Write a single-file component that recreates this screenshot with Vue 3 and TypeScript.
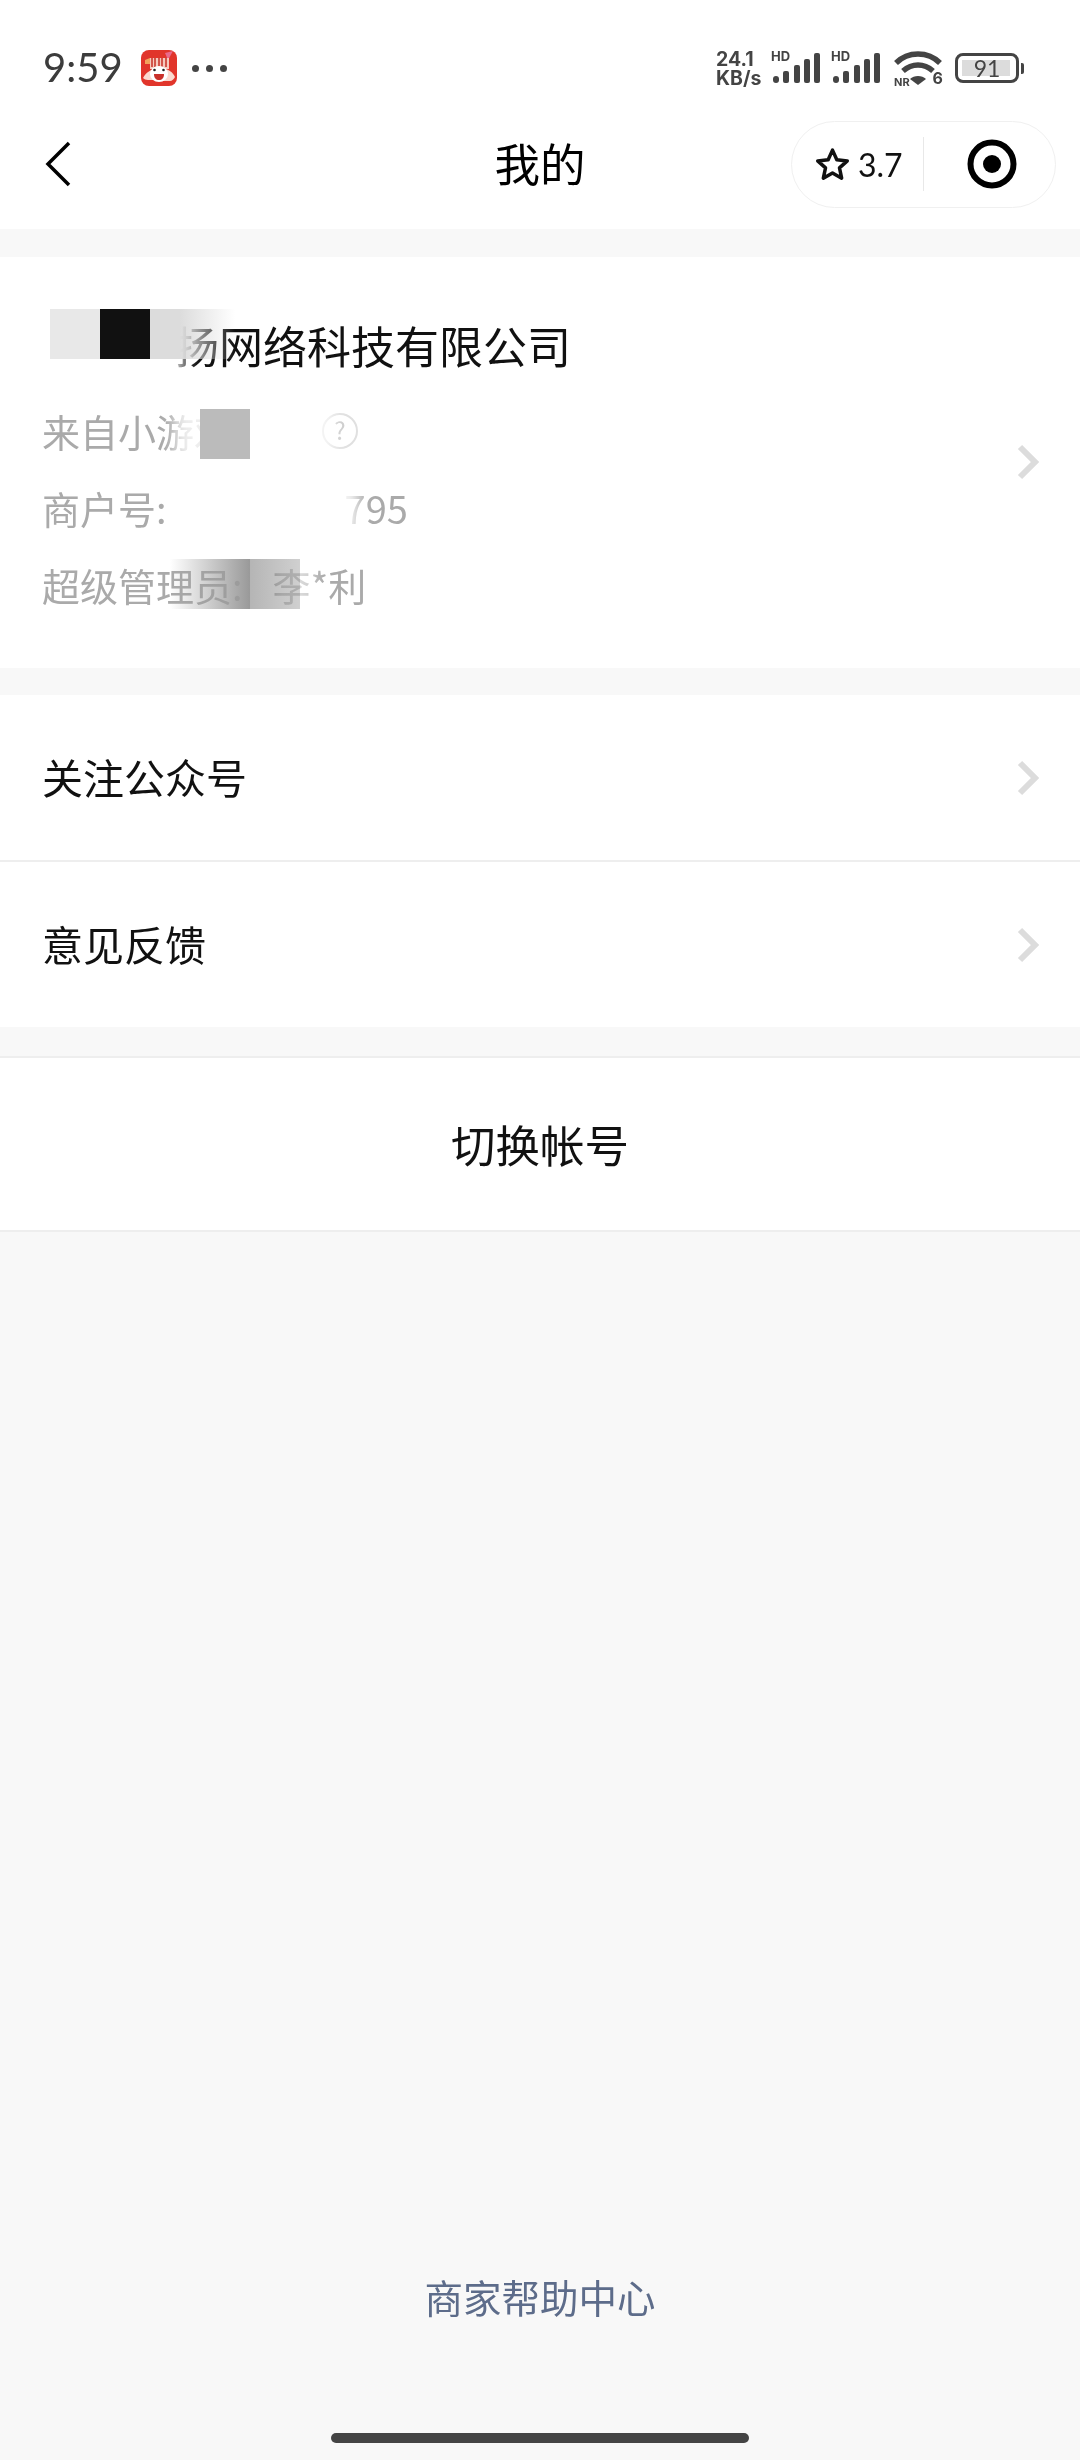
<template>
  <div class="page">
    <header class="top">
      <div class="status">
        <div class="status-left">
          <span class="clock">9:59</span>
          <svg class="app-icon" viewBox="0 0 36 36">
            <rect width="36" height="36" rx="8" fill="#e1352b" />
            <path d="M24 3l8-2-5 9z" fill="#e96a8c" />
            <path d="M4 10l5-2v6H4z" fill="#f2a35c" />
            <path d="M9 8h19v11H9z" fill="#f6c9bd" />
            <path d="M11 8v9M14 8v9M18 8v9M21 8v9M25 8v9" stroke="#c9392f" stroke-width="1.6" />
            <path d="M2 28c3-6 8-8 11-9l4 11H7c-2 0-4-1-5-2zM34 27c-2-5-7-8-11-8l-3 12h9c2 0 4-2 5-4z" fill="#fbd9cf" />
            <ellipse cx="18" cy="24" rx="9" ry="8" fill="#fff" />
            <circle cx="13.5" cy="20" r="1.3" fill="#222" />
            <circle cx="22.5" cy="20" r="1.3" fill="#222" />
            <path d="M13 24h10c0 4-2 6-5 6s-5-2-5-6z" fill="#c9302a" />
          </svg>
          <div class="dots"><i></i><i></i><i></i></div>
        </div>
        <div class="status-right">
          <div class="speed">24.1<br />KB/s</div>
          <div v-for="n in 2" :key="n" class="signal">
            <span class="hd">HD</span>
            <svg viewBox="0 0 48 32">
              <rect x="0" y="24" width="6" height="7" rx="3" />
              <rect x="10" y="19" width="6" height="12" rx="2" />
              <rect x="21" y="13" width="6" height="18" rx="2" />
              <rect x="31" y="7" width="6" height="24" rx="2" />
              <rect x="41" y="1" width="6" height="30" rx="2" />
            </svg>
          </div>
          <div class="wifi">
            <svg viewBox="0 0 48 36">
              <path d="M2 13C14 1 34 1 46 13" />
              <path d="M9 21c9-8 21-8 30 0" />
              <path d="M24 35l-8-6c4-4 12-4 16 0z" class="fill" />
            </svg>
            <span class="wifi-nr">NR</span>
            <span class="wifi-num">6</span>
          </div>
          <div class="battery">
            <div class="battery-body"><span class="battery-level"></span><span class="battery-text">91</span></div>
            <i class="battery-nub"></i>
          </div>
        </div>
      </div>

      <nav class="nav">
        <svg class="back" viewBox="0 0 26 46">
          <path d="M24 2L3 23l21 21" />
        </svg>
        <h1 class="title">我的</h1>
        <div class="capsule">
          <div class="rate">
            <svg class="star" viewBox="0 0 36 36">
              <path d="M18 4l4.2 9.4 10.2 1.1-7.6 6.8 2.1 10L18 26.200 9.100 31.300l2.100-10-7.600-6.800 10.200-1.100z" />
            </svg>
            <span>3.7</span>
          </div>
          <i class="capsule-line"></i>
          <svg class="target" viewBox="0 0 50 50">
            <circle cx="25" cy="25" r="21.500" fill="none" stroke="#000" stroke-width="6" />
            <circle cx="25" cy="25" r="9" fill="#000" />
          </svg>
        </div>
      </nav>
    </header>

    <section class="card merchant">
      <p class="name"><span class="name-gap"></span>扬网络科技有限公司</p>
      <p class="meta">来自小游戏</p>
      <p class="meta">商户号:<span class="id-gap"></span>795</p>
      <p class="meta">超级管理员:<span class="admin-gap"></span>李*利</p>
      <svg class="arrow merchant-arrow" viewBox="0 0 24 38"><path d="M4 4l15 15L4 34" /></svg>

      <!-- 打码区域 -->
      <div class="wipe wipe-name"></div>
      <div class="wipe wipe-meta"></div>
      <div class="wipe wipe-id"></div>
      <div class="wipe wipe-admin"></div>
      <div class="mosaic m1"></div>
      <div class="mosaic m2"></div>
      <div class="mosaic m3"></div>
      <div class="mosaic m4"></div>
      <div class="mosaic m5"></div>
      <div class="mosaic m6"></div>
      <div class="help">?</div>
      <div class="wipe wipe-help"></div>
    </section>

    <section class="card list">
      <div v-for="item in items" :key="item" class="row">
        <span class="row-label">{{ item }}</span>
        <svg class="arrow" viewBox="0 0 24 38"><path d="M4 4l15 15L4 34" /></svg>
      </div>
    </section>

    <section class="switch">切换帐号</section>

    <footer class="foot">
      <span class="help-link">商家帮助中心</span>
      <i class="home-bar"></i>
    </footer>
  </div>
</template>

<script setup lang="ts">
const items: string[] = ['关注公众号', '意见反馈']
</script>

<style scoped>
.page {
  width: 1080px;
  height: 2460px;
  display: flex;
  flex-direction: column;
  background: #f8f8f8;
  font-family: "Noto Sans CJK SC", "Noto Sans", sans-serif;
  color: #111;
  overflow: hidden;
}
.top {
  height: 229px;
  background: #fff;
}
.status {
  height: 120px;
  display: flex;
  justify-content: space-between;
  padding: 0 56px 0 43px;
  box-sizing: border-box;
}
.status-left {
  display: flex;
  align-items: center;
  height: 136px;
}
.clock {
  font-family: Lato, "Noto Sans", sans-serif;
  font-size: 40px;
  color: #3c3c3c;
  width: 98px;
  margin-top: -2px;
}
.app-icon {
  width: 36px;
  height: 36px;
}
.dots {
  display: flex;
  gap: 7px;
  margin-left: 15px;
}
.dots i {
  width: 7px;
  height: 7px;
  border-radius: 50%;
  background: #444;
}
.status-right {
  display: flex;
  align-items: flex-start;
  padding-top: 50px;
  color: #444;
}
.speed {
  width: 57px;
  font-family: Inter, sans-serif;
  font-size: 19.5px;
  font-weight: 700;
  line-height: 19px;
}
.signal {
  position: relative;
  width: 48px;
  height: 34px;
  margin-right: 12px;
  margin-top: 2px;
}
.signal svg {
  width: 48px;
  height: 32px;
  fill: #444;
  display: block;
}
.hd {
  position: absolute;
  left: -2px;
  top: -3px;
  font-family: Inter, sans-serif;
  font-size: 13px;
  font-weight: 700;
  line-height: 14px;
}
.wifi {
  position: relative;
  width: 48px;
  height: 36px;
  margin-left: 1px;
}
.wifi svg {
  width: 48px;
  height: 36px;
  fill: none;
  stroke: #444;
  stroke-width: 5.5;
  display: block;
}
.wifi svg .fill {
  fill: #444;
  stroke: none;
}
.wifi-nr {
  position: absolute;
  left: 0;
  top: 27px;
  font-family: Inter, sans-serif;
  font-size: 11px;
  font-weight: 700;
  line-height: 10px;
  background: #fff;
}
.wifi-num {
  position: absolute;
  right: -1px;
  top: 21px;
  font-family: Inter, sans-serif;
  font-size: 16px;
  font-weight: 700;
  line-height: 15px;
  background: #fff;
}
.battery {
  display: flex;
  align-items: center;
  margin-left: 13px;
  margin-top: 3px;
}
.battery-body {
  position: relative;
  width: 64px;
  height: 30px;
  box-sizing: border-box;
  border: 3px solid #444;
  border-radius: 8px;
}
.battery-level {
  position: absolute;
  left: 4px;
  top: 4px;
  bottom: 4px;
  right: 6px;
  background: #dcdcdc;
}
.battery-text {
  position: absolute;
  inset: 0;
  text-align: center;
  font-family: Lato, sans-serif;
  font-size: 23px;
  line-height: 24px;
  color: #444;
}
.battery-nub {
  width: 3px;
  height: 11px;
  margin-left: 2px;
  background: #444;
  border-radius: 0 2px 2px 0;
}
.nav {
  height: 88px;
  display: grid;
  grid-template-columns: 1fr auto 1fr;
  align-items: center;
  padding: 0 24px;
}
.back {
  width: 26px;
  height: 46px;
  margin-left: 21px;
  fill: none;
  stroke: #000;
  stroke-width: 3.5;
}
.title {
  margin: 0 0 4px;
  font-size: 45.5px;
  font-weight: 400;
  line-height: 60px;
  color: #000;
}
.capsule {
  justify-self: end;
  width: 265px;
  height: 87px;
  box-sizing: border-box;
  border: 1px solid #f0f0f0;
  border-radius: 44px;
  display: flex;
  align-items: center;
  padding-left: 22px;
}
.rate {
  display: flex;
  align-items: center;
  width: 109px;
  font-family: Lato, sans-serif;
  font-size: 32px;
  color: #111;
}
.star {
  width: 37px;
  height: 37px;
  margin-right: 7px;
  fill: none;
  stroke: #111;
  stroke-width: 3.4;
  stroke-linejoin: round;
}
.capsule-line {
  width: 1px;
  height: 54px;
  background: #e8e8e8;
}
.target {
  width: 50px;
  height: 50px;
  margin-left: 43px;
}
.card {
  background: #fff;
}
.merchant {
  position: relative;
  margin-top: 28px;
  height: 411px;
  box-sizing: border-box;
  padding: 58px 0 0 42px;
}
.merchant p {
  margin: 0;
}
.name {
  font-size: 44px;
  line-height: 60px;
  color: #111;
  margin-bottom: 17px !important;
}
.name-gap {
  display: inline-block;
  width: 133px;
}
.meta {
  font-size: 38px;
  line-height: 77px;
  color: #aaa;
}
.id-gap {
  display: inline-block;
  width: 178px;
}
.admin-gap {
  display: inline-block;
  width: 30px;
}
.arrow {
  width: 24px;
  height: 38px;
  fill: none;
  stroke: #dcdcdc;
  stroke-width: 6;
}
.merchant-arrow {
  position: absolute;
  right: 40px;
  top: 186px;
}
.wipe {
  position: absolute;
  background: #fff;
  filter: blur(7px);
}
.wipe-name {
  left: 160px;
  top: 62px;
  width: 26px;
  height: 60px;
  opacity: 0.75;
}
.wipe-meta {
  left: 175px;
  top: 145px;
  width: 40px;
  height: 60px;
  opacity: 0.8;
}
.wipe-id {
  left: 336px;
  top: 225px;
  width: 22px;
  height: 55px;
  opacity: 0.9;
}
.wipe-admin {
  left: 270px;
  top: 300px;
  width: 44px;
  height: 60px;
  opacity: 0.55;
}
.wipe-help {
  left: 312px;
  top: 150px;
  width: 22px;
  height: 50px;
  opacity: 0.7;
}
.mosaic {
  position: absolute;
  width: 50px;
  height: 50px;
}
.m1 {
  left: 50px;
  top: 52px;
  background: #e8e8e8;
}
.m2 {
  left: 100px;
  top: 52px;
  background: #111;
}
.m3 {
  left: 150px;
  top: 52px;
  background: linear-gradient(90deg, #dcdcdc 35%, rgba(220, 220, 220, 0));
  width: 85px;
}
.m4 {
  left: 200px;
  top: 152px;
  background: #bbb;
}
.m5 {
  left: 170px;
  top: 302px;
  width: 80px;
  background: linear-gradient(90deg, rgba(150, 150, 150, 0), #999);
}
.m6 {
  left: 250px;
  top: 302px;
  background: linear-gradient(90deg, #b5b5b5, #d0d0d0);
  mix-blend-mode: multiply;
}
.help {
  position: absolute;
  left: 322px;
  top: 156px;
  width: 36px;
  height: 36px;
  box-sizing: border-box;
  border: 2px solid #e0e0e0;
  border-radius: 50%;
  text-align: center;
  font-size: 24px;
  line-height: 30px;
  color: #ccc;
}
.list {
  margin-top: 27px;
}
.row {
  height: 165px;
  display: flex;
  align-items: center;
  justify-content: space-between;
  padding: 0 40px 0 42px;
  box-sizing: border-box;
  font-size: 41px;
  color: #111;
}
.row + .row {
  border-top: 2px solid #eee;
  height: 167px;
}
.row-label {
  margin-bottom: 3px;
}
.switch {
  margin-top: 29px;
  height: 176px;
  box-sizing: border-box;
  border-top: 2px solid #eee;
  border-bottom: 2px solid #eee;
  padding-bottom: 2px;
  background: #fff;
  display: flex;
  align-items: center;
  justify-content: center;
  font-size: 44.5px;
  color: #111;
}
.foot {
  margin-top: auto;
  display: flex;
  flex-direction: column;
  align-items: center;
}
.help-link {
  font-size: 38.5px;
  line-height: 52px;
  color: #5d6c8a;
  margin-bottom: 111px;
}
.home-bar {
  width: 418px;
  height: 10px;
  border-radius: 5px;
  background: #444;
  margin-bottom: 17px;
}
</style>
